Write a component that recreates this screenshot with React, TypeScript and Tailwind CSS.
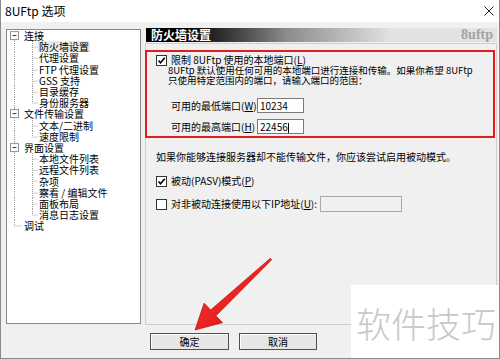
import React from 'react';

type Row = {
  label: React.ReactNode;
  kind: 'root' | 'child';
  first?: boolean;
  last?: boolean;
  leaf?: boolean;
  selected?: boolean;
};

const rows: Row[] = [
  { label: '连接', kind: 'root', first: true },
  { label: '防火墙设置', kind: 'child', selected: true },
  { label: '代理设置', kind: 'child' },
  { label: 'FTP 代理设置', kind: 'child' },
  { label: 'GSS 支持', kind: 'child' },
  { label: '目录缓存', kind: 'child' },
  { label: '身份服务器', kind: 'child', last: true },
  { label: '文件传输设置', kind: 'root' },
  { label: '文本/二进制', kind: 'child' },
  { label: '速度限制', kind: 'child', last: true },
  { label: '界面设置', kind: 'root' },
  { label: '本地文件列表', kind: 'child' },
  { label: '远程文件列表', kind: 'child' },
  { label: '杂项', kind: 'child' },
  { label: '察看 / 编辑文件', kind: 'child' },
  { label: '面板布局', kind: 'child' },
  { label: '消息日志设置', kind: 'child', last: true },
  { label: '调试', kind: 'root', last: true, leaf: true },
];

const H = 11.2;
const M = H / 2;
const dot = { stroke: '#a0a0a0', strokeWidth: 1, strokeDasharray: '1 1' };

function Lines({ row }: { row: Row }) {
  if (row.kind === 'root') {
    return (
      <svg width={17} height={H} className="shrink-0">
        {!row.first && <line x1={7.5} y1={0} x2={7.5} y2={row.leaf ? M : M - 4} {...dot} />}
        {!row.last && <line x1={7.5} y1={M + 4} x2={7.5} y2={H} {...dot} />}
        {row.leaf ? (
          <line x1={7.5} y1={M + 0.5} x2={15} y2={M + 0.5} {...dot} />
        ) : (
          <>
            <rect x={3.5} y={M - 4} width={8} height={8} fill="#fff" stroke="#919191" />
            <line x1={5.5} y1={M} x2={9.5} y2={M} stroke="#333" />
          </>
        )}
      </svg>
    );
  }
  return (
    <svg width={32} height={H} className="shrink-0">
      <line x1={7.5} y1={0} x2={7.5} y2={H} {...dot} />
      <line x1={25.5} y1={0} x2={25.5} y2={row.last ? M : H} {...dot} />
      <line x1={25.5} y1={M + 0.5} x2={31} y2={M + 0.5} {...dot} />
    </svg>
  );
}

function Check({ checked }: { checked?: boolean }) {
  return (
    <div className="w-[11px] h-[11px] shrink-0 border border-[#333] bg-white flex items-center justify-center">
      {checked && (
        <svg width={9} height={9} viewBox="0 0 9 9">
          <path d="M1.5 4.5 L3.5 6.8 L7.8 1.8" fill="none" stroke="#000" strokeWidth={1.6} />
        </svg>
      )}
    </div>
  );
}

export default function App() {
  return (
    <div className="relative w-[500px] h-[359px] overflow-hidden bg-[#f0f0f0] border-x border-b border-[#8a8a8a] font-['Noto_Sans_CJK_SC',sans-serif] text-black whitespace-nowrap">
      {/* title bar */}
      <div className="h-[22px] bg-white flex items-center justify-between pl-[4px] pr-[5px]">
        <span className="text-[12px] leading-none">8UFtp 选项</span>
        <svg width={10} height={10} viewBox="0 0 10 10">
          <path d="M0.5 0.5 L9.5 9.5 M9.5 0.5 L0.5 9.5" stroke="#222" strokeWidth={1} />
        </svg>
      </div>

      <div className="flex pt-[7px] pl-[5px]">
        {/* tree */}
        <div className="w-[135px] h-[295px] border border-[#828790] bg-white text-[10px] leading-[11.2px]">
          {rows.map((r, i) => (
            <div key={i} className="flex items-center h-[11.2px]">
              <Lines row={r} />
              <span className={r.selected ? 'bg-[#e8e8e8] px-px -ml-px leading-[11px]' : 'leading-[11px]'}>{r.label}</span>
            </div>
          ))}
        </div>

        {/* right panel */}
        <div className="ml-[4px] -mt-px w-[352px] h-[297px] flex flex-col">
          <div className="ml-px h-[14px] flex items-center justify-between bg-linear-to-r from-black from-5% via-[#8c8c8c] via-40% to-[#e3e3e3] to-70% pl-[5px] pr-[4px]">
            <span className="text-[12px] font-bold text-white leading-none">防火墙设置</span>
            <span className="font-['Liberation_Serif',serif] font-bold text-[14px] text-[#a3a3a3] leading-none">8uftp</span>
          </div>
          <div className="mt-px flex-1 border border-[#cfcfcf] pl-[10px] text-[10px]">
            <div className="mt-[10px] h-[12px] flex items-center gap-[4px]">
              <Check checked />
              <span className="leading-[12px]">
                限制 8UFtp 使用的本地端口(<u>L</u>)
              </span>
            </div>
            <div className="ml-[12px] mt-0 leading-[9.5px] text-[9.5px]">
              <div className="h-[9.5px]">8UFtp 默认使用任何可用的本地端口进行连接和传输。如果你希望 8UFtp</div>
              <div className="h-[9.5px]">只使用特定范围内的端口，请输入端口的范围：</div>
            </div>
            <div className="mt-[13px] ml-[15px] flex items-center h-[15px]">
              <span className="w-[86px] leading-[12px]">
                可用的最低端口(<u>W</u>)
              </span>
              <div className="w-[47px] h-[15px] border border-[#7a7a7a] bg-white text-[10px] leading-[13px] px-[2px]">10234</div>
            </div>
            <div className="mt-[6px] ml-[15px] flex items-center h-[15px]">
              <span className="w-[86px] leading-[12px]">
                可用的最高端口(<u>H</u>)
              </span>
              <div className="w-[47px] h-[15px] border border-[#7a7a7a] bg-white text-[10px] leading-[13px] px-[2px]">
                22456<span className="inline-block w-px h-[10px] bg-black align-middle" />
              </div>
            </div>
            <div className="mt-[17px] h-[12px] leading-[12px] text-[10px]">
              如果你能够连接服务器却不能传输文件，你应该尝试启用被动模式。
            </div>
            <div className="mt-[12px] h-[12px] flex items-center gap-[4px] text-[10px]">
              <Check checked />
              <span className="leading-[12px]">
                被动(PASV)模式(<u>P</u>)
              </span>
            </div>
            <div className="mt-[9px] h-[16px] flex items-center text-[10px]">
              <Check />
              <span className="ml-[4px] w-[149px] leading-[12px]">
                对非被动连接使用以下IP地址(<u>U</u>):
              </span>
              <div className="w-[82px] h-[16px] border border-[#a8a8a8] bg-[#f0f0f0]" />
            </div>
          </div>
        </div>
      </div>

      {/* buttons */}
      <div className="flex gap-[10px] pl-[149px] mt-[8px]">
        <button className="w-[79px] h-[17px] border border-[#505050] bg-[#e6e6e6] shadow-[inset_1px_1px_#fff] text-[10px] leading-none">
          确定
        </button>
        <button className="w-[78px] h-[17px] border border-[#505050] bg-[#e6e6e6] shadow-[inset_1px_1px_#fff] text-[10px] leading-none">
          取消
        </button>
      </div>

      {/* annotation: red frame */}
      <div className="absolute left-[144px] top-[50px] w-[350px] h-[88px] border-2 border-[#e11d1d]" />

      {/* annotation: arrow */}
      <svg className="absolute left-0 top-0 pointer-events-none" width={500} height={359}>
        <defs>
          <linearGradient id="ar" x1="0" y1="0" x2="1" y2="1">
            <stop offset="0" stopColor="#ff3a3a" />
            <stop offset="1" stopColor="#d40d0d" />
          </linearGradient>
        </defs>
        <polygon
          points="270.7,259.7 215,315.8 221.5,322.7 194,330 203.1,303.1 209.6,310 269.3,258.3"
          fill="url(#ar)"
          stroke="#b30000"
          strokeWidth={0.6}
        />
      </svg>

      {/* watermark */}
      <div className="absolute left-[350px] top-[285px] w-[150px] h-[74px] bg-white flex items-center justify-center">
        <span className="text-[35px] font-light text-[#c8c8c8] leading-none">软件技巧</span>
      </div>
    </div>
  );
}
